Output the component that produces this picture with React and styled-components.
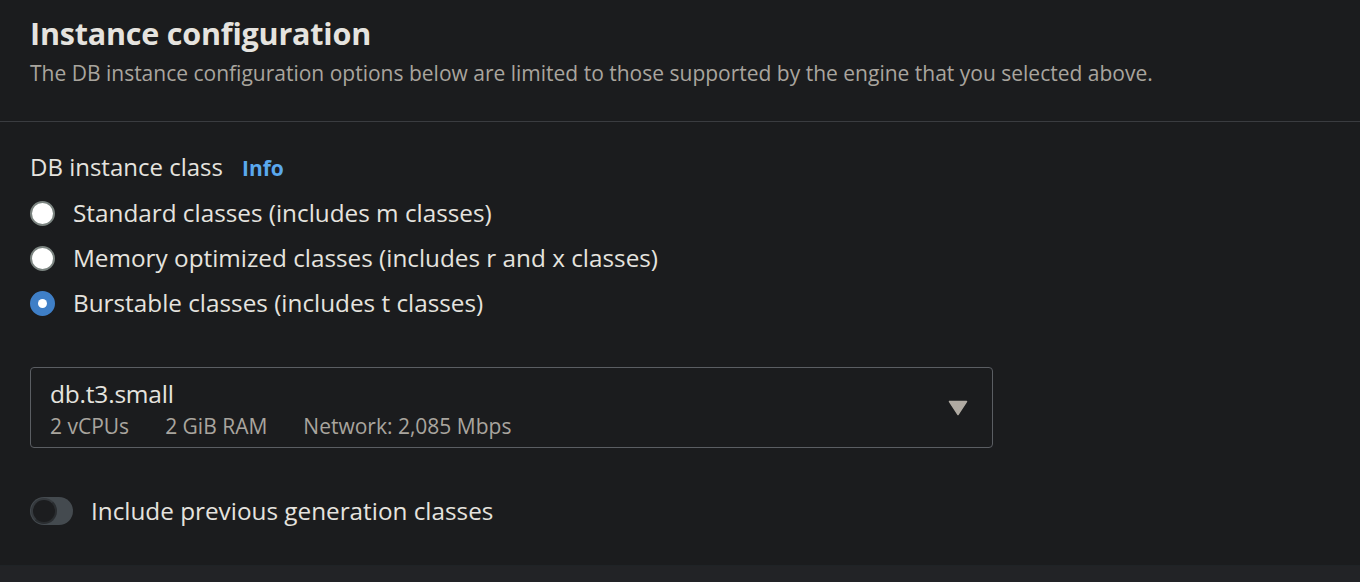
import React from "react";
import styled, { createGlobalStyle } from "styled-components";

const Global = createGlobalStyle`
  html, body { margin: 0; padding: 0; background: #1b1c1e; }
  body { font-family: "Open Sans", "Noto Sans", Arial, sans-serif; -webkit-font-smoothing: antialiased; }
`;

const Page = styled.div`
  width: 1360px;
  height: 582px;
  display: flex;
  flex-direction: column;
  background: #1b1c1e;
  color: #e5e3df;
  overflow: hidden;
`;

const Panel = styled.section`
  flex: 0 0 565px;
  display: flex;
  flex-direction: column;
  background: #1b1c1e;
`;

const Header = styled.header`
  padding: 13px 30px 0;
  height: 122px;
  box-sizing: border-box;
  border-bottom: 1px solid #3a3c40;
`;

const Title = styled.h2`
  margin: 0;
  font-size: 30.5px;
  line-height: 40px;
  font-weight: 700;
  color: #e5e3df;
  letter-spacing: -0.2px;
`;

const Description = styled.p`
  margin: 5px 0 0;
  font-size: 21px;
  line-height: 30px;
  color: #a9a59e;
  letter-spacing: 0;
`;

const Body = styled.div`
  padding: 28px 30px 0;
  display: flex;
  flex-direction: column;
`;

const FieldLabel = styled.div`
  display: flex;
  align-items: baseline;
  gap: 19px;
  font-size: 24px;
  line-height: 34px;
  color: #e5e3df;
`;

const InfoLink = styled.a`
  font-weight: 700;
  font-size: 21px;
  color: #5aa8ee;
  text-decoration: none;
`;

const RadioGroup = styled.div`
  display: flex;
  flex-direction: column;
  gap: 11px;
  margin-top: 11px;
`;

const RadioRow = styled.label`
  display: flex;
  align-items: center;
  gap: 18px;
  font-size: 24.3px;
  line-height: 34px;
  color: #e5e3df;
`;

const RadioDot = styled.span`
  width: 25px;
  height: 25px;
  border-radius: 50%;
  box-sizing: border-box;
  flex: 0 0 auto;
  position: relative;
  background: ${(p) => (p.$checked ? "#3f7fc7" : "#ffffff")};
  border: 2px solid ${(p) => (p.$checked ? "#3f7fc7" : "#7b8480")};
  &::after {
    content: "";
    display: ${(p) => (p.$checked ? "block" : "none")};
    position: absolute;
    left: 50%;
    top: 50%;
    width: 9px;
    height: 9px;
    margin: -4.5px 0 0 -4.5px;
    border-radius: 50%;
    background: #ffffff;
  }
`;

const Select = styled.div`
  margin-top: 47px;
  width: 963px;
  height: 81px;
  box-sizing: border-box;
  border: 1px solid #5b5e63;
  border-radius: 4px;
  padding: 10px 24px 0 19px;
  display: flex;
  align-items: flex-start;
  justify-content: space-between;
`;

const SelectText = styled.div`
  display: flex;
  flex-direction: column;
`;

const SelectValue = styled.div`
  font-size: 24.5px;
  line-height: 32px;
  color: #e5e3df;
  letter-spacing: -0.2px;
`;

const Tags = styled.div`
  margin-top: 1px;
  display: flex;
  gap: 36px;
  font-size: 21px;
  line-height: 30px;
  color: #a9a59e;
`;

const Caret = styled.svg`
  align-self: center;
  margin-top: -10px;
  flex: 0 0 auto;
`;

const ToggleRow = styled.label`
  margin-top: 46px;
  display: flex;
  align-items: center;
  gap: 18px;
  font-size: 24.3px;
  line-height: 34px;
  color: #e5e3df;
`;

const Toggle = styled.span`
  width: 43px;
  height: 28px;
  border-radius: 14px;
  background: #444a4f;
  position: relative;
  flex: 0 0 auto;
  &::after {
    content: "";
    position: absolute;
    left: 1px;
    top: 1px;
    width: 26px;
    height: 26px;
    box-sizing: border-box;
    border-radius: 50%;
    background: #1c1d1f;
    border: 2px solid #2a2d30;
    border-left-color: #35393d;
    border-top-color: #35393d;
  }
`;

const Footer = styled.div`
  flex: 1;
  background: #222326;
  border-top: 1px solid #1f2326;
`;

export default function App() {
  return (
    <>
      <Global />
      <Page>
        <Panel>
          <Header>
            <Title>Instance configuration</Title>
            <Description>
              The DB instance configuration options below are limited to those supported by the engine that you selected above.
            </Description>
          </Header>
          <Body>
            <FieldLabel>
              DB instance class <InfoLink href="#">Info</InfoLink>
            </FieldLabel>
            <RadioGroup>
              <RadioRow>
                <RadioDot />
                Standard classes (includes m classes)
              </RadioRow>
              <RadioRow>
                <RadioDot />
                Memory optimized classes (includes r and x classes)
              </RadioRow>
              <RadioRow>
                <RadioDot $checked />
                Burstable classes (includes t classes)
              </RadioRow>
            </RadioGroup>
            <Select>
              <SelectText>
                <SelectValue>db.t3.small</SelectValue>
                <Tags>
                  <span>2 vCPUs</span>
                  <span>2 GiB RAM</span>
                  <span>Network: 2,085 Mbps</span>
                </Tags>
              </SelectText>
              <Caret width="20" height="16" viewBox="0 0 20 16">
                <path d="M1.5 1.5 H18.5 L10 14.5 Z" fill="#b0aaa2" stroke="#b0aaa2" strokeLinejoin="round" strokeWidth="1.5" />
              </Caret>
            </Select>
            <ToggleRow>
              <Toggle />
              Include previous generation classes
            </ToggleRow>
          </Body>
        </Panel>
        <Footer />
      </Page>
    </>
  );
}
